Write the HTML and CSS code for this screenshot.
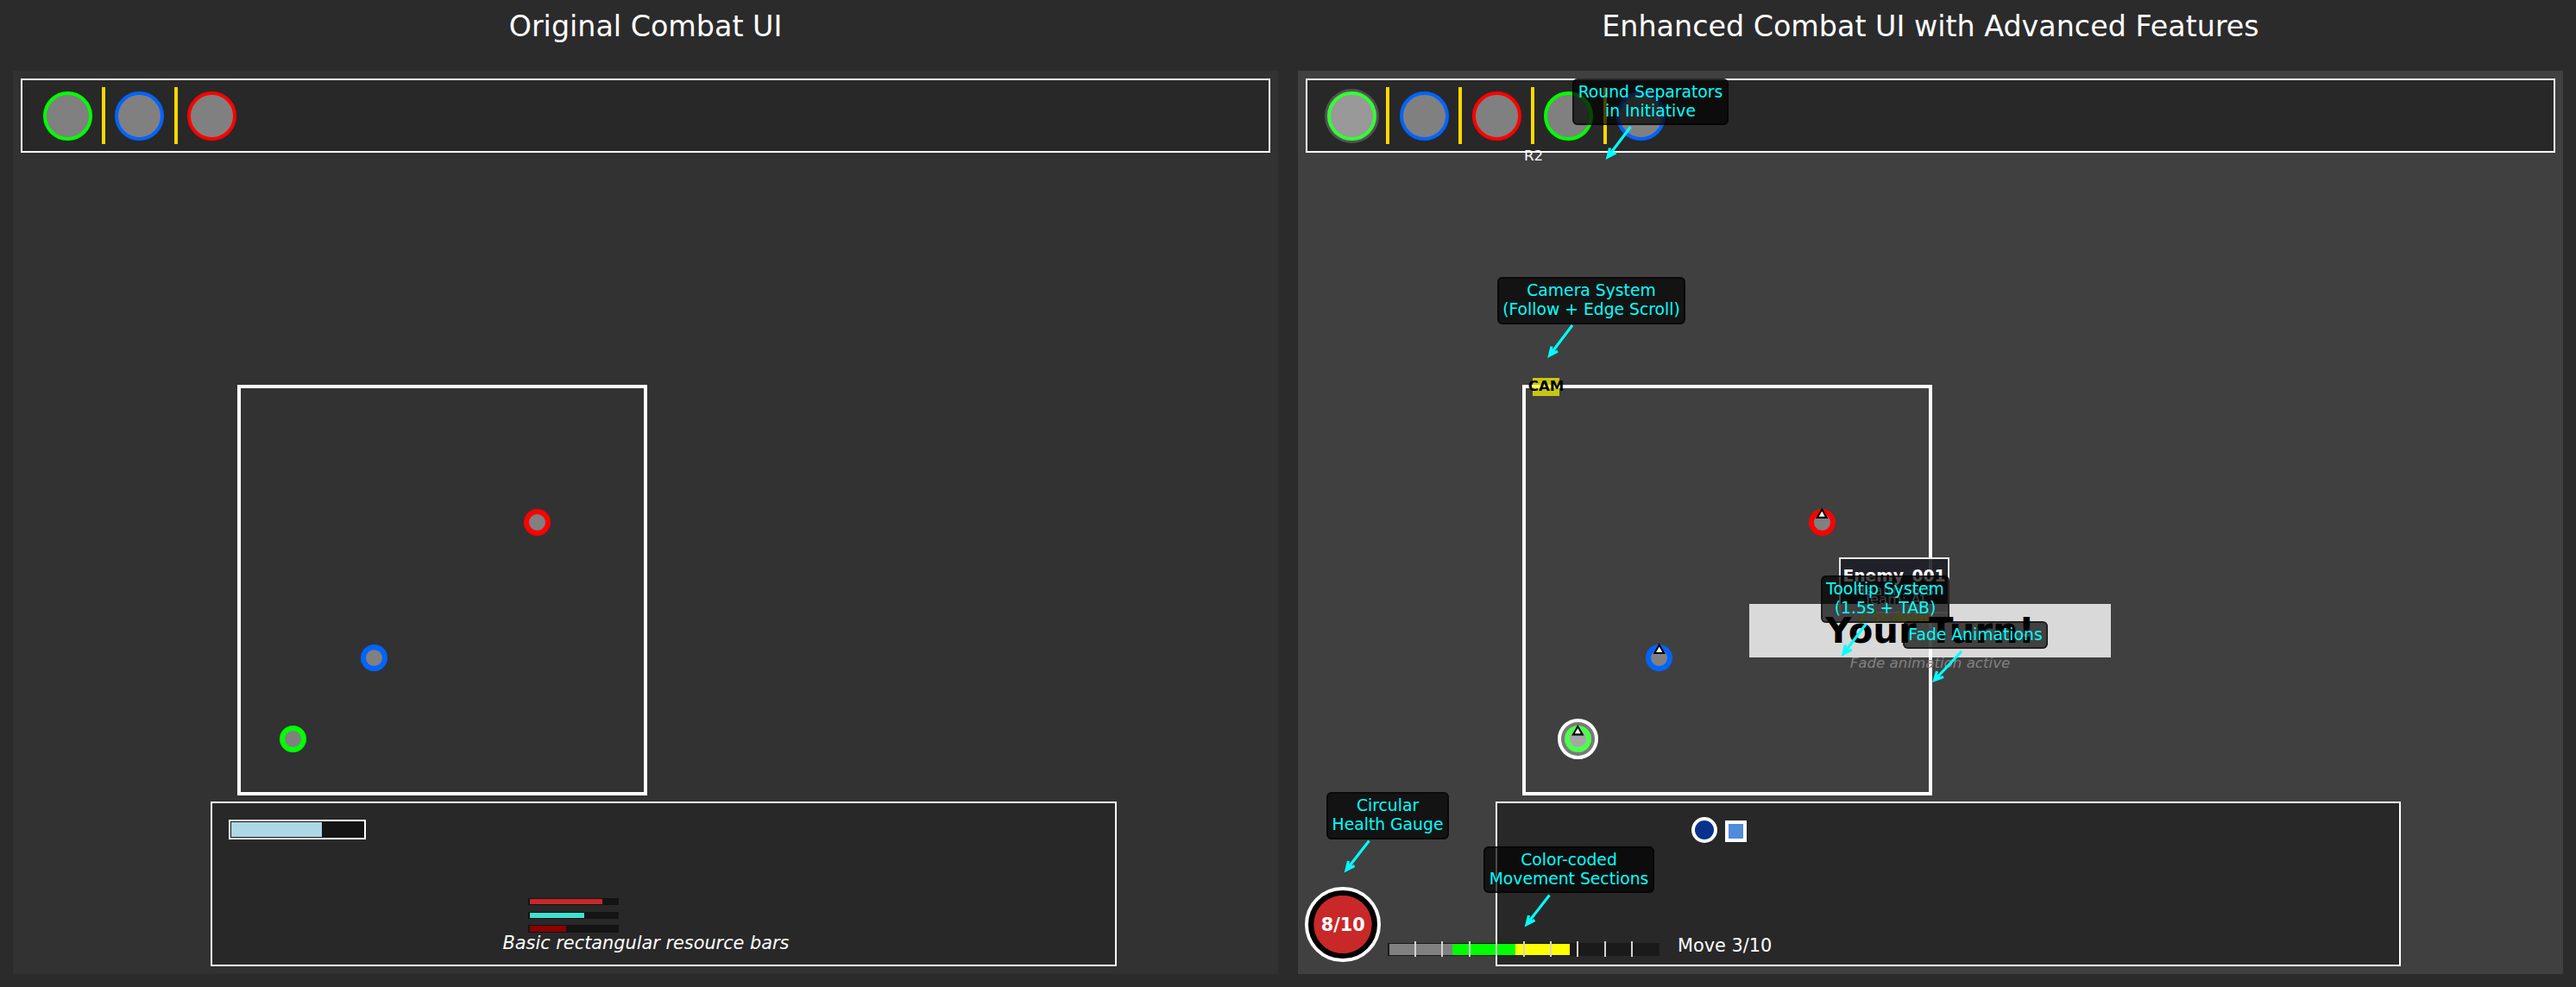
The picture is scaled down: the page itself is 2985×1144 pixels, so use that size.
FILE: index.html
```html
<!DOCTYPE html>
<html lang="en">
<head>
<meta charset="utf-8">
<title>Combat UI comparison</title>
<link rel="stylesheet" href="styles.css">
</head>
<body>
<main class="comparison">
  <section class="panel">
    <h1 class="title">Original Combat UI</h1>
    <div class="stage basic">
      <div class="initiative">
        <i class="portrait ally"></i><i class="sep"></i>
        <i class="portrait hero"></i><i class="sep"></i>
        <i class="portrait enemy"></i>
      </div>
      <div class="field">
        <i class="token enemy" style="left:347.2px;top:159.2px"></i>
        <i class="token hero" style="left:158.7px;top:316.3px"></i>
        <i class="token ally" style="left:64.3px;top:410.7px"></i>
      </div>
      <div class="hud">
        <div class="bar-main"><i></i></div>
        <div class="bars">
          <div class="bar health"><i style="width:84px"></i></div>
          <div class="bar energy"><i style="width:63px"></i></div>
          <div class="bar rage"><i style="width:42px"></i></div>
        </div>
        <p class="caption">Basic rectangular resource bars</p>
      </div>
    </div>
  </section>

  <section class="panel">
    <h1 class="title">Enhanced Combat UI with Advanced Features</h1>
    <div class="stage enhanced">
      <div class="initiative">
        <i class="portrait ally active"></i><i class="sep"></i>
        <i class="portrait hero"></i><i class="sep"></i>
        <i class="portrait enemy"></i><i class="sep"></i>
        <i class="portrait ally"></i><i class="sep"></i>
        <i class="portrait hero"></i>
      </div>
      <div class="field">
        <i class="token enemy" style="left:347.2px;top:159.2px"></i>
        <i class="token hero" style="left:158.7px;top:316.3px"></i>
        <i class="token ally active" style="left:64.3px;top:410.7px"></i>
        <svg class="facing" viewBox="0 0 475 476">
          <path d="M347.2 144.5l5.4 9.4h-10.8zM158.7 301.6l5.4 9.4h-10.8zM64.3 396l5.4 9.4h-10.8z"/>
        </svg>
      </div>
      <div class="hud">
        <div class="actions"><i class="orb"></i><i class="gem"></i></div>
      </div>

      <div class="round">R2</div>
      <div class="cam"><b>CAM</b></div>
      <div class="gauge">8/10</div>
      <div class="movement">
        <i class="used"></i><i class="near"></i><i class="far"></i>
        <svg class="ticks" viewBox="0 0 315 18"><path d="M32 0v18M63 0v18M95 0v18M126 0v18M158 0v18M189 0v18M220 0v18M252 0v18M283 0v18"/></svg>
      </div>
      <div class="move-label">Move 3/10</div>

      <div class="tooltip"></div>
      <div class="tip-text tip-name">Enemy_001</div>
      <div class="tip-text tip-health">Health: 6/8</div>
      <div class="tip-text tip-team">Team: AI</div>
      <div class="banner"></div>
      <div class="tip-text tip-delay">1.5s delay</div>
      <div class="banner-text">Your Turn!</div>
      <div class="banner-note">Fade animation active</div>

      <div class="callout" style="left:318px;top:8.5px;width:181px">Round Separators<br>in Initiative</div>
      <div class="callout" style="left:231px;top:239px;width:218px">Camera System<br>(Follow + Edge Scroll)</div>
      <div class="callout" style="left:606px;top:585px;width:149px">Tooltip System<br>(1.5s + TAB)</div>
      <div class="callout single" style="left:701px;top:638px;width:168px">Fade Animations</div>
      <div class="callout" style="left:33px;top:836px;width:142px">Circular<br>Health Gauge</div>
      <div class="callout" style="left:215px;top:898.5px;width:198px">Color-coded<br>Movement Sections</div>
      <svg class="arrows" viewBox="0 0 1466 1047">
        <path d="M385.500 65L359.000 100M361.500 89.500L359.000 100L368.500 95"/>
        <path d="M318 295L291.500 330M294 319.500L291.500 330L301 325"/>
        <path d="M658.500 641L632 676M634.500 665.500L632 676L641.500 671"/>
        <path d="M769 673L737.500 706.500M740.500 696L737.500 706.500L748 702.500"/>
        <path d="M82.500 892.500L56 926.500M58.500 916L56 926.500L65.500 921.500"/>
        <path d="M291.500 955.500L265 989.500M267.500 979L265 989.500L274.500 984.500"/>
      </svg>
    </div>
  </section>
</main>
</body>
</html>
```
FILE: styles.css
```css
* { box-sizing: border-box; }
body {
  margin: 0;
  background: #2b2b2b;
  color: #fff;
  font-family: "DejaVu Sans", sans-serif;
}
i { font-style: normal; display: block; flex: none; }
.comparison {
  display: grid;
  grid-template-columns: 1466px 1466px;
  column-gap: 23px;
  padding-left: 15px;
  height: 1144px;
}
.title {
  margin: 0;
  height: 82px;
  padding-top: 11px;
  font-size: 33.333px;
  line-height: 40px;
  font-weight: 400;
  text-align: center;
  white-space: nowrap;
}
.stage {
  position: relative;
  display: flex;
  flex-direction: column;
  height: 1047px;
  padding-top: 9px;
  background: #323232;
}
.enhanced { background: #404040; }

.initiative {
  display: flex;
  align-items: center;
  gap: 11.4px;
  height: 86px;
  margin: 0 9px;
  padding-left: 23px;
  border: 2px solid #fff;
  background: #282828;
}
.basic .initiative { padding-left: 23.7px; }
.portrait {
  position: relative;
  width: 57px;
  height: 57px;
  border: 4px solid;
  border-radius: 50%;
  background: #808080;
}
.ally { border-color: #0f0; }
.hero { border-color: #0064ff; }
.enemy { border-color: #f00; }
.portrait.active::after {
  content: "";
  position: absolute;
  inset: -7px;
  border-radius: 50%;
  background: rgba(255, 255, 255, .2);
}
.sep { width: 4px; height: 66px; background: #ffd700; }

.field {
  position: relative;
  width: 475px;
  height: 476px;
  margin: 269px 0 0 260px;
  border: 4px solid #fff;
}
.token {
  position: absolute;
  width: 31.4px;
  height: 31.4px;
  margin: -19.7px 0 0 -19.7px;
  border: 6.2px solid;
  border-radius: 50%;
  background: #808080;
}
.token.ally { border-color: #0f0; }
.token.hero { border-color: #0064ff; }
.token.enemy { border-color: #f00; }
.token.active::after {
  content: "";
  position: absolute;
  inset: -13.7px;
  border: 4.2px solid #fff;
  border-radius: 50%;
  background: rgba(255, 255, 255, .3);
}
.facing {
  position: absolute;
  left: -4px;
  top: -4px;
  width: 475px;
  height: 476px;
  fill: #fff;
  stroke: #000;
  stroke-width: 2.08;
}

.hud {
  width: 1050px;
  height: 191px;
  margin: 7px 0 0 229px;
  padding: 19px;
  border: 2px solid #fff;
  background: #282828;
}
.enhanced .hud { width: 1049px; }
.bar-main {
  width: 159px;
  height: 23px;
  padding: 1px;
  border: 2px solid #fff;
  background: #141414;
}
.bar-main i { width: 105px; height: 17px; background: #add8e6; }
.bars {
  display: flex;
  flex-direction: column;
  gap: 8px;
  margin: 68px 0 0 347px;
}
.bar {
  width: 105px;
  height: 8px;
  padding: 1px 2px;
  background: #141414;
}
.bar i { height: 6px; }
.health i { background: #c82828; }
.energy i { background: #40e0d0; }
.rage { height: 9px; margin-top: -1px; }
.rage i { height: 7px; background: #8b0000; }
.caption {
  margin: 0 0 0 -41px;
  font-size: 20.833px;
  line-height: 24px;
  font-style: italic;
  text-align: center;
}
.actions { display: flex; align-items: center; gap: 9px; margin: -3.5px 0 0 206px; }
.orb {
  width: 30px;
  height: 30px;
  border: 4px solid #fff;
  border-radius: 50%;
  background: #0a328c;
}
.gem { width: 25px; height: 25px; margin-top: 4px; border: 4px solid #fff; background: #508cdc; }

.round, .cam, .gauge, .movement, .move-label, .tooltip, .tip-text,
.banner, .banner-text, .banner-note, .callout, .arrows {
  position: absolute;
  white-space: nowrap;
}
.round { left: 262px; top: 89px; font-size: 16.667px; line-height: 20px; }
.cam {
  left: 272px;
  top: 356px;
  display: flex;
  justify-content: center;
  width: 31px;
  height: 21px;
  background: rgba(255, 255, 0, .7);
  color: #000;
  font-size: 16.667px;
  line-height: 20px;
}
.gauge {
  left: 8.400px;
  top: 945.600px;
  width: 87.700px;
  height: 87.700px;
  border: 4px solid #fff;
  border-radius: 50%;
  background: radial-gradient(circle, #c82828 33.200px, #000 34px);
  font-size: 20.833px;
  line-height: 80px;
  font-weight: 700;
  text-align: center;
}
.movement {
  left: 104px;
  top: 1011px;
  display: flex;
  width: 315px;
  height: 15px;
  padding: 1px 2px;
  background: #1a1a1a;
}
.movement i { width: 73px; height: 13px; }
.movement .used { background: #808080; }
.movement .near { background: #0f0; }
.movement .far { width: 63px; background: #ff0; }
.ticks {
  position: absolute;
  left: 0;
  top: -2px;
  width: 315px;
  height: 18px;
  stroke: #d3d3d3;
  stroke-width: 2;
}
.move-label { left: 440px; top: 1001.5px; font-size: 20.833px; line-height: 24px; }

.tooltip {
  left: 627px;
  top: 564px;
  width: 128px;
  height: 65px;
  border: 2px solid rgba(255, 255, 255, .9);
  background: rgba(30, 30, 40, .9);
}
.tip-text { left: 627px; width: 128px; font-size: 16.667px; line-height: 20px; text-align: center; }
.tip-name { top: 575px; font-size: 18.750px; line-height: 22px; font-weight: 700; }
.tip-health { top: 593px; color: #d3d3d3; }
.tip-team { top: 603px; color: #d3d3d3; }
.tip-delay { top: 624px; color: #ff0; font-style: italic; }
.banner {
  left: 523px;
  top: 618px;
  width: 419px;
  height: 62px;
  background: rgba(255, 255, 255, .8);
}
.banner-text {
  left: 523px;
  top: 624px;
  width: 419px;
  color: #000;
  font-size: 41.667px;
  line-height: 50px;
  font-weight: 700;
  text-align: center;
}
.banner-note {
  left: 523px;
  top: 676.5px;
  width: 419px;
  color: #808080;
  font-size: 16.667px;
  line-height: 20px;
  font-style: italic;
  text-align: center;
}
.callout {
  height: 54.500px;
  padding-top: 5px;
  border-radius: 6px;
  background: rgba(0, 0, 0, .7);
  box-shadow: inset 0 0 0 2px rgba(0, 0, 0, .5);
  color: #0ff;
  font-size: 18.750px;
  line-height: 22px;
  text-align: center;
}
.callout.single { height: 32px; }
.arrows {
  left: 0;
  top: 0;
  width: 1466px;
  height: 1047px;
  fill: none;
  stroke: #0ff;
  stroke-width: 3.125;
}
```
